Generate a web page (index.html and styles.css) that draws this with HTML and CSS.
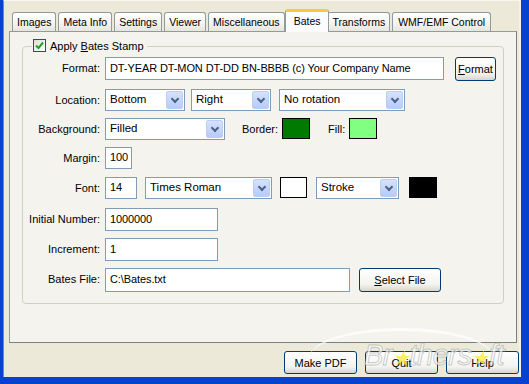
FILE: index.html
```html
<!DOCTYPE HTML>
<html>
<head>
  <link rel="stylesheet" href="styles.css">
</head>
<body>
<div class="window">
  <div class="tabs">
    <div class="tab">Images</div>
    <div class="tab">Meta Info</div>
    <div class="tab">Settings</div>
    <div class="tab">Viewer</div>
    <div class="tab">Miscellaneous</div>
    <div class="tab active">Bates</div>
    <div class="tab">Transforms</div>
    <div class="tab">WMF/EMF Control</div>
  </div>

  <div class="panel">
    <fieldset class="group">
      <legend><span class="check"><svg width="9" height="9" viewBox="0 0 9 9"><path d="M1 4.5 L3.5 7 L8 1.5" fill="none" stroke="#21a121" stroke-width="2"/></svg></span>Apply <u>B</u>ates Stamp</legend>

      <div class="form">
        <div class="lbl">Format:</div>
        <div class="ctl">
          <div class="field w-format">DT-YEAR DT-MON DT-DD BN-BBBB (c) Your Company Name</div>
          <button class="btn btn-format"><u>F</u>ormat</button>
        </div>

        <div class="lbl">Location:</div>
        <div class="ctl">
          <div class="combo w-loc"><span>Bottom</span><i class="arrow"></i></div>
          <div class="combo w-loc"><span>Right</span><i class="arrow"></i></div>
          <div class="combo w-rot"><span>No rotation</span><i class="arrow"></i></div>
        </div>

        <div class="lbl">Background:</div>
        <div class="ctl">
          <div class="combo w-bg"><span>Filled</span><i class="arrow"></i></div>
          <span class="sublbl lbl-border">Border:</span>
          <div class="swatch" style="background:#007a00"></div>
          <span class="sublbl lbl-fill">Fill:</span>
          <div class="swatch" style="background:#80ff80"></div>
        </div>

        <div class="lbl">Margin:</div>
        <div class="ctl">
          <div class="field small w-margin">100</div>
        </div>

        <div class="lbl">Font:</div>
        <div class="ctl">
          <div class="field small w-size">14</div>
          <div class="combo w-font"><span>Times Roman</span><i class="arrow"></i></div>
          <div class="swatch white" style="background:#ffffff"></div>
          <div class="combo w-stroke"><span>Stroke</span><i class="arrow"></i></div>
          <div class="swatch black" style="background:#000000"></div>
        </div>

        <div class="lbl">Initial Number:</div>
        <div class="ctl">
          <div class="field w-num">1000000</div>
        </div>

        <div class="lbl">Increment:</div>
        <div class="ctl">
          <div class="field w-num">1</div>
        </div>

        <div class="lbl">Bates File:</div>
        <div class="ctl">
          <div class="field tall w-file">C:\Bates.txt</div>
          <button class="btn btn-select"><u>S</u>elect File</button>
        </div>
      </div>
    </fieldset>
  </div>

  <div class="actions">
    <button class="btn btn-action">Make PDF</button>
    <button class="btn btn-action">Quit</button>
    <button class="btn btn-action">Help</button>
  </div>

  <div class="swoosh"></div>
  <div class="watermark">Br<span class="star">&#9733;</span>thers<span class="star">&#9733;</span>ft</div>
</div>
</body>
</html>
```

FILE: styles.css
```css
* {
  box-sizing: border-box;
}
body {
  margin: 0;
  width: 529px;
  height: 384px;
  overflow: hidden;
  background: #0a3fd4;
  font-family: "Liberation Sans", Arial, sans-serif;
  font-size: 11px;
  color: #000;
}
.window {
  position: relative;
  height: 377px;
  margin: 0 8px 0 3px;
  background: #ece9d8;
  border-top: 1px solid #f7f6f0;
  border-left: 1px solid #5c88f0;
  border-right: 2px solid #f4f2e8;
  overflow: hidden;
}

/* tab strip */
.tabs {
  display: flex;
  align-items: flex-end;
  height: 30px;
  padding-left: 8px;
}
.tab {
  height: 19px;
  line-height: 18px;
  padding: 0 4px;
  margin-right: 2px;
  border: 1px solid #919b9c;
  border-bottom: none;
  border-radius: 3px 3px 0 0;
  background: linear-gradient(#ffffff, #f3f3ef 60%, #e6e5dd);
  font-size: 10.5px;
  white-space: nowrap;
}
.tab.active {
  position: relative;
  z-index: 1;
  height: 23px;
  margin: 0 0 -1px -2px;
  padding: 0 8px;
  line-height: 19px;
  border-top: 3px solid #ffc83c;
  background: #fcfcfe;
}
.tab.active + .tab {
  margin-left: -2px;
}
.tab:last-child {
  padding: 0 5px;
}

/* tab page */
.panel {
  width: 508px;
  height: 312px;
  margin-left: 5px;
  padding-top: 7px;
  border: 1px solid #919b9c;
  border-right-color: #7a8184;
  border-bottom-color: #7a8184;
  background: #f4f3ee;
}
.group {
  height: 265px;
  margin: 0 12px 0 12px;
  padding: 4px 0 0 6px;
  border: 1px solid #d0d0bf;
  border-radius: 4px;
}
.group legend {
  height: 14px;
  line-height: 14px;
  margin-left: 3px;
  padding: 0 3px 0 1px;
  white-space: nowrap;
}
.check {
  display: inline-flex;
  align-items: center;
  justify-content: center;
  vertical-align: top;
  width: 13px;
  height: 13px;
  margin-right: 4px;
  border: 1px solid #1c5180;
  background: linear-gradient(135deg, #dcdcd7, #ffffff);
}

/* form grid */
.form {
  display: grid;
  grid-template-columns: 71px 1fr;
  grid-template-rows: 32px 29px 29px 30px 31px 30px 30px 24px;
  column-gap: 5px;
}
.lbl {
  text-align: right;
  padding-top: 5px;
  white-space: nowrap;
}
.ctl {
  display: flex;
  align-items: flex-start;
}
.field {
  height: 23px;
  padding: 4px 4px 0;
  border: 1px solid #7f9db9;
  background: #fff;
  font-size: 11px;
  letter-spacing: -0.1px;
  white-space: nowrap;
  overflow: hidden;
}
.field.small {
  height: 22px;
  padding-top: 3px;
}
.field.tall {
  height: 24px;
}
.combo {
  display: flex;
  justify-content: space-between;
  height: 22px;
  padding: 1px;
  border: 1px solid #7f9db9;
  background: #fff;
  font-size: 11.5px;
}
.combo span {
  padding: 2px 0 0 3px;
  white-space: nowrap;
}
.arrow {
  position: relative;
  width: 17px;
  height: 18px;
  border: 1px solid #bccef6;
  border-radius: 2px;
  background: linear-gradient(#d6e2fc, #b6cbf8);
}
.arrow::after {
  content: "";
  position: absolute;
  left: 5px;
  top: 4px;
  width: 4px;
  height: 4px;
  border-right: 2px solid #4d6185;
  border-bottom: 2px solid #4d6185;
  transform: rotate(45deg);
}
.swatch {
  width: 28px;
  height: 21px;
  border: 1px solid #000;
}

.w-format { width: 339px; }
.w-loc { width: 80px; margin-right: 6px; }
.w-loc + .w-loc { margin-right: 8px; }
.w-rot { width: 126px; }
.w-bg { width: 120px; }
.w-margin { width: 27px; }
.w-size { width: 32px; margin-right: 8px; }
.w-font { width: 127px; margin-right: 8px; }
.w-stroke { width: 83px; margin-right: 10px; }
.white { margin-right: 9px; width: 27px; }
.w-num { width: 113px; }
.w-file { width: 245px; }

.sublbl {
  padding: 5px 4px 0 0;
}
.lbl-border { margin-left: 17px; }
.lbl-fill { margin-left: 18px; }

/* buttons */
.btn {
  height: 23px;
  padding: 0;
  border: 1px solid #003c74;
  border-radius: 3px;
  background: linear-gradient(#ffffff, #f3f3ef 70%, #d9d5cb);
  font-family: "Liberation Sans", Arial, sans-serif;
  font-size: 11px;
  color: #000;
}
.btn-format {
  width: 41px;
  height: 24px;
  margin-left: 11px;
}
.btn-select {
  width: 82px;
  height: 24px;
  margin-left: 9px;
}
.actions {
  display: flex;
  justify-content: flex-end;
  gap: 8px;
  padding: 8px 0 0 0;
}
.btn-action {
  width: 73px;
}

/* watermark */
.swoosh {
  position: absolute;
  left: 305px;
  top: 327px;
  width: 185px;
  height: 60px;
  border-top: 3px solid rgba(255, 255, 255, 0.75);
  border-radius: 50%;
  pointer-events: none;
}
.watermark {
  position: absolute;
  left: 360px;
  top: 337px;
  font-size: 29px;
  font-style: italic;
  line-height: 34px;
  letter-spacing: -0.5px;
  color: rgba(255, 255, 255, 0.72);
  -webkit-text-stroke: 1px rgba(140, 140, 140, 0.45);
  pointer-events: none;
  white-space: nowrap;
}
.star {
  color: rgba(255, 235, 60, 0.8);
  -webkit-text-stroke: 0;
  font-size: 20px;
}
```
